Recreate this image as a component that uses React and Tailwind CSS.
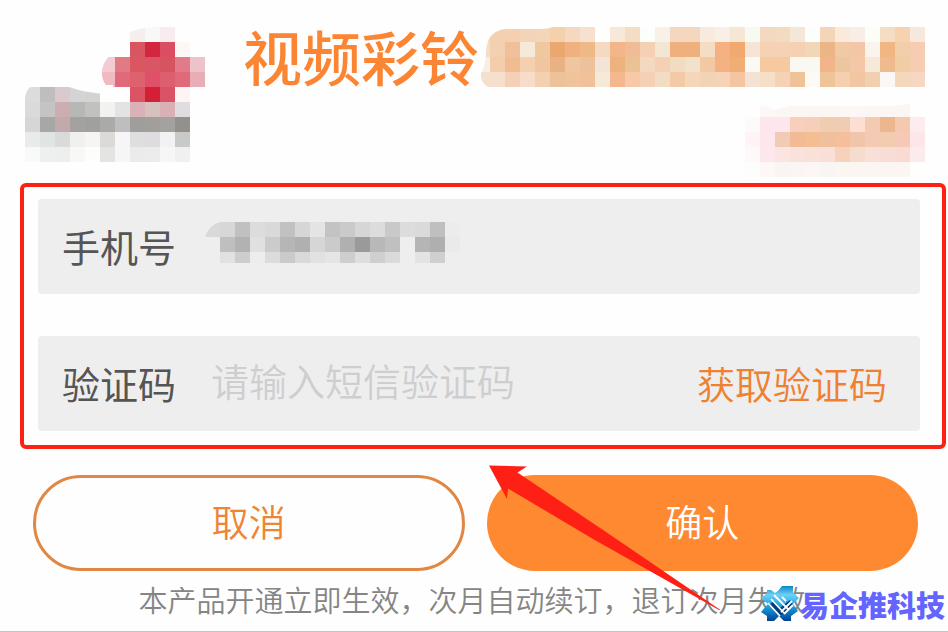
import { useId, useState } from 'react';

const CELL = 15;

const LOGO_ROWS = [
  '. . . . . . . f5eeec f9f8f9 f9ecee fefefe .',
  '. . . . . . . d85662 d32740 db4d60 fdf7f5 .',
  '. . . . . f3ccd3 e07a83 da5762 d95667 d5545f e27b88 edc3cb',
  '. . . . . f0bac3 e06a7b de626d e05068 dd5f6e e06a79 e9adb5',
  'dcdcdc c1bdbd dac9cd d4d4d4 d2d3d3 . . dc5364 d32034 da5266 fcf5f3 .',
  'dadada c4c4c3 ccadb2 b7b7b6 c1c1c0 f2f2f1 e2e3e4 d9b1b7 d6c1bf d8b0b6 dfdddf .',
  'd7d5d6 a8a7a8 c2a9ab a4a2a1 a0a09e aaaaa9 bdbebd 9e9e9c a29f9b a2a29e 92918c .',
  'e9eaea e0e4e3 d9dbdb f0f0ef f7f5f3 dbdad7 f7f5f5 dedede dfdce0 f2f2f2 c8c9c9 .',
  'f9f9f9 eeefef eeeeec f8f8f5 fdfdfb e4e4e2 f6f6f6 ebebeb ececec f6f6f6 f0f0f0 .',
];

const TITLE_ROWS = [
  'f3d3b5 f4d0b0 f5d0ae f4d3b8 f3d6b8 f4d0ad f4d9c0 f8e0d0 fefefd f7e8d9 f5ddc3 fcfefb f9f0e8 f3d7be f3d8bf f8ebdd f8efe6 f6e7d5 f7f9f3 f3d9bf f3dbc1 f4e7d7 fbfefb f4d5b8 fbe9dc f8eee6 fcfcf8 f4dcc5 f6d2b0 f7e8de',
  'f5dcc5 f3d0b0 f0c09a f5ead8 efc8a0 eaa870 f0b07f efb888 f4dac2 f3b68a f0bc95 f5d0b3 f3e6d2 efb07d efb07d f5dcc5 f5b181 f0a96e f6e5d6 f4d2b3 f4d2b3 f4d1b3 f2d6b8 ecb585 efcaa5 f4c5a7 f9f4ee f1b682 f3ceab f6cdb0',
  'f8eee2 f2ceac f1bd90 f4d0b0 f0c6a0 eab182 efc69f edc29a f4e4d7 eeb27f eac296 f3d9c0 f6d0b5 f1dcc2 f3e2cb f2c9a4 f4b182 f0ad75 fafaf4 f6c99f f6c99f f9f8f1 f9f8f1 f2b488 ebc69f f4c7a7 f7e9d8 efba8e f0cda3 f6cdb0',
  'f4e0ce f5e0ce f5d0b9 f7dcca f2d0b0 edc299 efc49b f1c29a f5ead7 f4b78e f7c9a7 f5d0b5 f2dcc3 f3caa5 f4d6b9 f2d4b5 f5d2b8 f4c5a0 f4e3d4 f6dfc7 f5d2b6 f0c298 fbfaf4 f0c499 f5d0b0 f1c6a0 f0d0b0 faf7f4 f3d8bb f6d8c2',
];

const TAG_ROWS = [
  'fdfefd fdf8f6 fbf5f4 fcf6f3 fcf6f3 fcf6f3 fcf6f4 fcf6f4 fcf6f3 fcf6f3 fcf5f2 fefefd',
  'fcfbfa fde6ed fde7ec f7cfbc f5cfb9 f0ccb0 f0ccb2 fcdfd2 f5cab3 ecb68e f5c8b0 fdecee',
  'fff3f5 fde6ec f0ccb4 f2bb96 f4bd92 f0c09c f5bf9d f1c5aa f5cab4 f3cbaf f5c9b5 fde6e9',
  'fdf9f9 fde6ec fae5e1 f9e2dc f9e1d9 f8dfd8 f6d2bb f5dccd f8e0d9 f7ddd5 f9dbd3 fdeaeb',
  'fcfefc fdf7f5 faf5f5 fbf6f4 fcf6f4 faf5f5 fcf6f3 fcf6f3 fcf6f3 fcf6f3 fcf6f3 fefefc',
];

const PHONE_ROWS = [
  'd9d9d9 d7d7d7 c0c0c0 dcdcdc d9d9d9 c1c1c1 d6d6d6 e4e4e4 c3c3c3 cacaca d6d6d6 dcdcdc c9c9c9 dcdcdc dadada bfbfbf ececec',
  '. bfbfbf b2b2b2 e0e0e0 cbcbcb b6b6b6 b0b0b0 d6d6d6 cbcbcb b0b0b0 9a9a9a b8b8b8 c0c0c0 eeeeee b5b5b5 afafaf eaeaea',
  '. e1e1e1 cdcdcd ededed dcdcdc cacaca d9d9d9 e1e1e1 e5e5e5 cecece dedede cfcfcf dadada eeeeee e3e3e3 cfcfcf eeeeee',
];

// Pixelated block. `clip` is an optional path that trims the outer cells.
const Mosaic = ({ rows, width, height, offsetX = 0, clip, className }) => {
  const clipId = useId();

  return (
    <svg
      aria-hidden="true"
      width={width}
      height={height}
      viewBox={`${offsetX} 0 ${width} ${height}`}
      shapeRendering="crispEdges"
      className={className}
    >
      {clip && (
        <clipPath id={clipId}>
          <path d={clip} />
        </clipPath>
      )}
      <g clipPath={clip ? `url(#${clipId})` : undefined}>
        {rows.map((row, y) =>
          row.split(' ').map((color, x) =>
            color === '.' ? null : (
              <rect key={`${x}-${y}`} x={x * CELL} y={y * CELL} width={CELL} height={CELL} fill={`#${color}`} />
            ),
          ),
        )}
      </g>
    </svg>
  );
};

const Header = () => (
  <header className="flex gap-[38px] pt-[27px] pr-[23px] pl-[25px]">
    <Mosaic
      rows={LOGO_ROWS}
      width={180}
      height={135}
      className="shrink-0"
      clip="M0 135V70Q2 61 6 60H44Q58 65 75 66.500H88V58H81Q76 52 77 43Q78 36 85 28Q90 20 105 5Q118 0 135 0H180V135Z"
    />
    <div className="flex min-w-0 flex-1 flex-col gap-[15px]">
      <div className="flex">
        <h1 className="min-w-0 flex-1 text-[59px] leading-[58px] font-medium whitespace-nowrap text-[#fb8532]">视频彩铃</h1>
        <Mosaic
          rows={TITLE_ROWS}
          width={445}
          height={60}
          offsetX={5}
          className="shrink-0"
          clip="M13 60Q5 55 6 46Q11 38 11 27Q11 3 32 2H66Q72 2 78 0H450V60Z"
        />
      </div>
      <Mosaic
        rows={TAG_ROWS}
        width={180}
        height={75}
        className="self-end"
        clip="M0 75V6Q15 0 30 8L45 4H150L165 2H180V75Z"
      />
    </div>
  </header>
);

const Field = ({ id, label, children }) => (
  <div className="flex h-[95px] items-center rounded-sm bg-[#efeeef] pr-[33px] pb-px pl-6">
    <label htmlFor={id} className="w-[149px] shrink-0 text-[38px] leading-[48px] text-[#555]">
      {label}
    </label>
    {children}
  </div>
);

const Arrow = () => (
  <svg
    aria-hidden="true"
    width="234"
    height="146"
    viewBox="0 0 234 146"
    className="pointer-events-none absolute top-[465px] left-[489px]"
  >
    <path d="M0 .5L38 1.500L28.500 7.500L120 69L231.500 145L230 145L104 74L19 23.500L18 34Z" fill="#ff2015" />
  </svg>
);

const WatermarkLogo = () => (
  <svg aria-hidden="true" width="40" height="38" viewBox="0 0 40 38">
    <defs>
      <linearGradient id="wm-top" x1="0" y1="0" x2="0" y2="1">
        <stop offset="0" stopColor="#0b86c8" />
        <stop offset=".25" stopColor="#6fd0f5" />
        <stop offset=".6" stopColor="#11a0e0" />
        <stop offset="1" stopColor="#063f93" />
      </linearGradient>
    </defs>
    <path
      d="M7 5L11 5L15 8L18 6L22 1H33V7L39 13L33 19L38 26L31 31V36H24L19 31L14 36H7V31L1 27L8 19L1 13L7 8Z"
      fill="url(#wm-top)"
    />
    <path d="M9 20L14 16L20 23L30 15L33 20L20 31Z" fill="#073b77" />
    <path
      d="M14 10L28 24M11 14L24 28M8 18L20 31M22 12L26 16M32 16L21 27M33 20L24 29"
      fill="none"
      stroke="#fff"
      strokeWidth="1.8"
    />
  </svg>
);

const Watermark = () => (
  <div className="absolute right-[3px] bottom-2 flex items-center">
    <WatermarkLogo />
    <span className="text-[29px] leading-9 font-black whitespace-nowrap text-[#6464ff]">易企推科技</span>
  </div>
);

const App = () => {
  const [phone, setPhone] = useState('');
  const [code, setCode] = useState('');

  return (
    <main className="relative flex min-h-screen flex-col overflow-hidden border-b border-[#c4c4c4] bg-[#fefefe] font-['Noto_Sans_CJK_SC',sans-serif]">
      <Header />

      <form onSubmit={(e) => e.preventDefault()}>
        <div className="mt-[6px] mr-[2px] ml-5 flex flex-col gap-[42px] rounded-md border-4 border-[#ff2015] pt-3 pr-[22px] pb-[14px] pl-[14px]">
          <Field id="phone" label="手机号">
            <div className="relative min-w-0 flex-1">
              <input
                id="phone"
                type="tel"
                value={phone}
                onChange={(e) => setPhone(e.target.value)}
                className="block h-12 w-full bg-transparent text-[38px] text-[#555] outline-none"
              />
              <Mosaic
                rows={PHONE_ROWS}
                width={255}
                height={41}
                className="pointer-events-none absolute top-0 -left-[6px]"
                clip="M0 15Q4 3 15 0H255V41H0Z"
              />
            </div>
          </Field>
          <Field id="code" label="验证码">
            <input
              id="code"
              type="text"
              placeholder="请输入短信验证码"
              value={code}
              onChange={(e) => setCode(e.target.value)}
              className="mb-2 h-12 min-w-0 flex-1 bg-transparent text-[38px] font-[350] text-[#555] outline-none placeholder:text-[#cecece]"
            />
            <button type="button" className="shrink-0 text-[38px] leading-[48px] font-[350] whitespace-nowrap text-[#ee8030]">
              获取验证码
            </button>
          </Field>
        </div>

        <div className="mt-[26px] mr-[30px] ml-[33px] grid grid-cols-2 gap-[22px] text-[37px] leading-[48px]">
          <button type="button" className="h-24 rounded-full border-3 border-[#e08843] pb-1 font-[350] text-[#f08435]">
            取消
          </button>
          <button type="submit" className="h-24 rounded-full bg-[#ff8930] pb-1 font-[350] text-white">
            确认
          </button>
        </div>
      </form>

      <p className="mt-3 pr-1 text-center text-[29px] leading-8 font-[350] whitespace-nowrap text-[#858585]">
        本产品开通立即生效，次月自动续订，退订次月失效
      </p>

      <Arrow />
      <Watermark />
    </main>
  );
};

export default App;
